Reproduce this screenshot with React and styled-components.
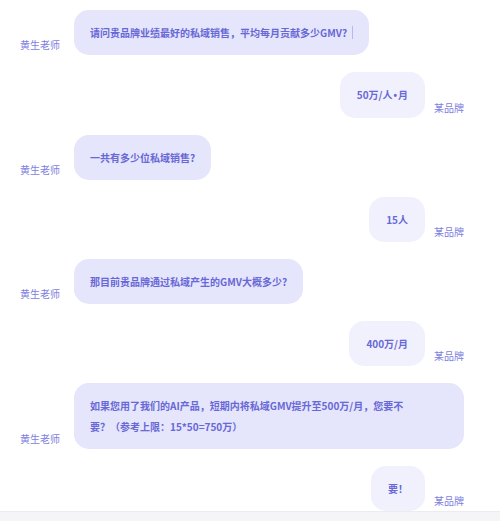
import styled, { createGlobalStyle } from 'styled-components';

const GlobalStyle = createGlobalStyle`
  html, body {
    margin: 0;
    padding: 0;
    background: #ffffff;
  }
  body {
    font-family: "Noto Sans CJK SC", "Noto Sans", sans-serif;
  }
`;

const Page = styled.div`
  width: 500px;
  height: 521px;
  display: flex;
  flex-direction: column;
  overflow: hidden;
  background: #ffffff;
`;

const ChatList = styled.div`
  flex: 1;
  display: flex;
  flex-direction: column;
  gap: 17px;
  padding: 10px 36px 0 20px;
`;

const Row = styled.div`
  display: flex;
  align-items: flex-end;
  justify-content: ${({ $mine }) => ($mine ? 'flex-end' : 'flex-start')};
  gap: ${({ $mine }) => ($mine ? '9px' : '14px')};
`;

const Name = styled.div`
  font-size: 10px;
  line-height: 21px;
  color: #7e7ee0;
  white-space: nowrap;
  flex-shrink: 0;
`;

const Bubble = styled.div`
  box-sizing: border-box;
  width: ${({ $width }) => ($width ? `${$width}px` : 'auto')};
  padding: 12px ${({ $mine }) => ($mine ? '17px' : '16px')};
  border-radius: 15px;
  background: ${({ $mine }) => ($mine ? '#f1f1fd' : '#e5e5fc')};
  color: #6868d6;
  font-size: 10px;
  font-weight: 600;
  line-height: 21px;
  white-space: nowrap;
`;

const Dot = styled.span`
  font-family: "Liberation Sans", sans-serif;
  margin: 0 1px;
`;

const Caret = styled.span`
  display: inline-block;
  width: 1px;
  height: 13px;
  margin-left: 5px;
  vertical-align: -2px;
  background: #b8b8ee;
`;

const Footer = styled.div`
  height: 9px;
  border-top: 1px solid #ececf0;
  background: #f5f5f7;
`;

const messages = [
  { mine: false, text: '请问贵品牌业绩最好的私域销售，平均每月贡献多少GMV?', caret: true },
  { mine: true, text: <>50万/人<Dot>•</Dot>月</> },
  { mine: false, text: '一共有多少位私域销售?' },
  { mine: true, text: '15人' },
  { mine: false, text: '那目前贵品牌通过私域产生的GMV大概多少?' },
  { mine: true, text: '400万/月' },
  {
    mine: false,
    width: 393,
    lines: ['如果您用了我们的AI产品，短期内将私域GMV提升至500万/月，您要不', '要？（参考上限：15*50=750万）'],
  },
  { mine: true, text: '要！' },
];

const Message = ({ mine, text, lines, caret, width }) => (
  <Row $mine={mine}>
    {!mine && <Name>黄生老师</Name>}
    <Bubble $mine={mine} $width={width}>
      {lines
        ? lines.map((line, i) => (
            <span key={i}>
              {line}
              {i < lines.length - 1 && <br />}
            </span>
          ))
        : text}
      {caret && <Caret />}
    </Bubble>
    {mine && <Name>某品牌</Name>}
  </Row>
);

const App = () => (
  <Page>
    <GlobalStyle />
    <ChatList>
      {messages.map((m, i) => (
        <Message key={i} {...m} />
      ))}
    </ChatList>
    <Footer />
  </Page>
);

export default App;
